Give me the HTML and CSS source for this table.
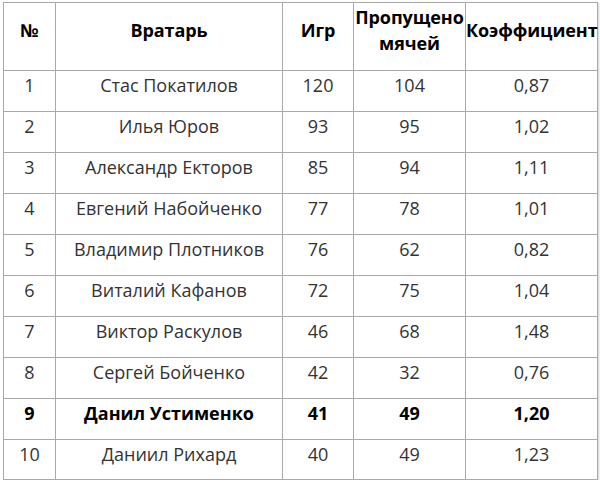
FILE: index.html
```html
<!DOCTYPE html>
<html>
<head>
<meta charset="utf-8">
<link rel="stylesheet" href="styles.css">
</head>
<body>
<table class="stats">
  <colgroup>
    <col class="c-num"><col class="c-name"><col class="c-games"><col class="c-goals"><col class="c-coef">
  </colgroup>
  <thead>
    <tr><th>№</th><th>Вратарь</th><th>Игр</th><th>Пропущено мячей</th><th>Коэффициент</th></tr>
  </thead>
  <tbody>
    <tr><td>1</td><td>Стас Покатилов</td><td>120</td><td>104</td><td>0,87</td></tr>
    <tr><td>2</td><td>Илья Юров</td><td>93</td><td>95</td><td>1,02</td></tr>
    <tr><td>3</td><td>Александр Екторов</td><td>85</td><td>94</td><td>1,11</td></tr>
    <tr><td>4</td><td>Евгений Набойченко</td><td>77</td><td>78</td><td>1,01</td></tr>
    <tr><td>5</td><td>Владимир Плотников</td><td>76</td><td>62</td><td>0,82</td></tr>
    <tr><td>6</td><td>Виталий Кафанов</td><td>72</td><td>75</td><td>1,04</td></tr>
    <tr><td>7</td><td>Виктор Раскулов</td><td>46</td><td>68</td><td>1,48</td></tr>
    <tr><td>8</td><td>Сергей Бойченко</td><td>42</td><td>32</td><td>0,76</td></tr>
    <tr class="hl"><td>9</td><td>Данил Устименко</td><td>41</td><td>49</td><td>1,20</td></tr>
    <tr class="last"><td>10</td><td>Даниил Рихард</td><td>40</td><td>49</td><td>1,23</td></tr>
  </tbody>
</table>
</body>
</html>
```
FILE: styles.css
```css
html, body {
  margin: 0;
  padding: 0;
  background: #fff;
}
body {
  padding: 2px 0 0 3px;
  font-family: "Open Sans", "Liberation Sans", sans-serif;
}
.stats {
  border-collapse: collapse;
  table-layout: fixed;
  width: 594px;
  box-shadow: 1px 1px 2px rgba(0,0,0,0.18);
}
.c-num { width: 52px; }
.c-name { width: 227px; }
.c-games { width: 71px; }
.c-goals { width: 112px; }
.c-coef { width: 132px; }
.stats th, .stats td {
  border: 1px solid #a9a9a9;
  text-align: center;
  padding: 0;
  white-space: nowrap;
  box-sizing: border-box;
}
.stats th {
  height: 68px;
  padding: 0 0 14px;
  font-weight: 700;
  font-size: 18px;
  line-height: 26px;
  color: #000;
  white-space: normal;
  vertical-align: middle;
  letter-spacing: -0.1px;
}
.stats td {
  height: 41px;
  font-size: 18px;
  line-height: 24px;
  color: #333;
  vertical-align: top;
  padding-top: 2px;
}
.stats tr.last td {
  height: 40px;
}
.stats tr.hl td {
  font-weight: 700;
  color: #000;
}
```
